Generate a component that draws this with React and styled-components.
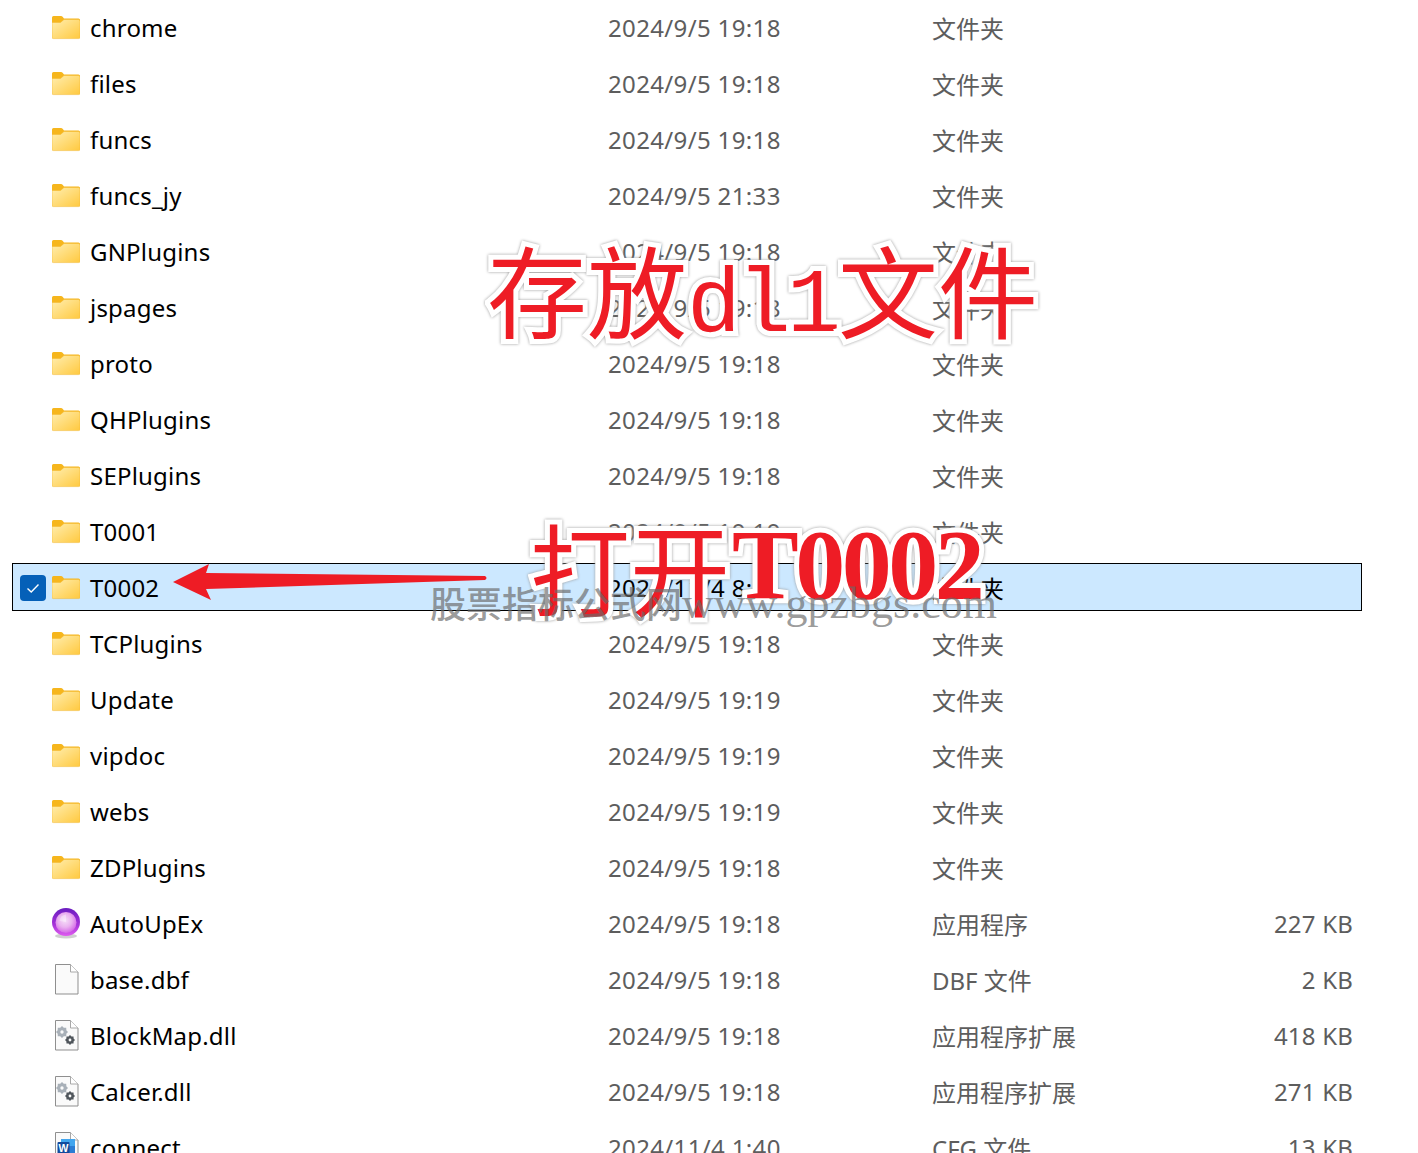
import React from "react";
import styled, { createGlobalStyle } from "styled-components";

const Global = createGlobalStyle`
  html, body { margin: 0; padding: 0; background: #fff; }
  body { width: 1418px; height: 1153px; overflow: hidden; }
`;

const Page = styled.div`
  position: relative;
  width: 1418px;
  height: 1153px;
  overflow: hidden;
  background: #fff;
  font-family: "Noto Sans", "Noto Sans CJK SC", sans-serif;
  font-size: 24px;
`;

const List = styled.div`
  display: flex;
  flex-direction: column;
  gap: 8px;
  padding: 3px 56px 0 12px;
`;

const Row = styled.div`
  display: grid;
  grid-template-columns: 39px 38px 518px 324px 1fr auto;
  align-items: center;
  height: 48px;
  box-sizing: border-box;
  padding: 1px 8px 0 0;
  border: 1px solid ${p => (p.$selected ? "#000" : "transparent")};
  background: ${p => (p.$selected ? "#cce8ff" : "transparent")};
  color: ${p => (p.$selected ? "#000" : "#5d5d5d")};
`;

const CheckCell = styled.div`
  display: flex;
  padding-left: 7px;
`;

const Check = styled.div`
  width: 26px;
  height: 26px;
  border-radius: 4px;
  background: #0560b8;
  display: flex;
  align-items: center;
  justify-content: center;
`;

const IconCell = styled.div`
  display: flex;
  align-items: center;
  height: 32px;
`;

const Name = styled.div`
  color: #000;
  letter-spacing: 0.2px;
  white-space: nowrap;
`;

const DateText = styled.div`
  letter-spacing: 0.35px;
  white-space: nowrap;
`;

const TypeText = styled.div`
  white-space: nowrap;
`;

const Size = styled.div`
  text-align: right;
  letter-spacing: 0.2px;
  white-space: nowrap;
`;

const Title = styled.div`
  position: absolute;
  left: ${p => p.$x}px;
  top: ${p => p.$y}px;
  display: flex;
  align-items: baseline;
  font-family: "Noto Sans CJK SC", sans-serif;
  font-size: 100px;
  line-height: 100px;
  white-space: nowrap;
  color: #ee1c25;
  -webkit-text-stroke: 10px #fff;
  paint-order: stroke fill;
  filter: drop-shadow(0 0 1.5px #9a9a9a);
`;

const MonoLatin = styled.span`
  font-family: "Liberation Mono", monospace;
  font-size: 90px;
  letter-spacing: -4px;
  margin-right: 1px;
`;

const SerifLatin = styled.span`
  font-family: "Liberation Serif", serif;
  font-weight: 700;
  font-size: 100px;
  letter-spacing: -3.5px;
  margin-left: 2px;
  transform: translateY(-11px);
`;

const Watermark = styled.div`
  position: absolute;
  left: 430px;
  top: 579px;
  font-family: "Noto Sans CJK SC", sans-serif;
  font-size: 36px;
  font-weight: 500;
  line-height: 46px;
  color: rgba(105, 105, 105, 0.68);
  white-space: nowrap;
`;

const WatermarkLatin = styled.span`
  font-family: "Liberation Serif", serif;
  font-size: 44px;
`;

const ArrowSvg = styled.svg`
  position: absolute;
  left: 170px;
  top: 560px;
`;

const Folder = () => (
  <svg width="28" height="24" viewBox="0 0 28 24">
    <defs>
      <linearGradient id="fg" x1="0" y1="0" x2="1" y2="1">
        <stop offset="0" stopColor="#ffeeb0" />
        <stop offset="1" stopColor="#ffc93f" />
      </linearGradient>
    </defs>
    <path d="M0 1.5A1.5 1.5 0 0 1 1.5 0H9a2 2 0 0 1 1.6.8L12 2.5h14.5A1.5 1.5 0 0 1 28 4v6H0z" fill="#f6b61d" />
    <path d="M0 6.5H8.5L12 3.5H26.5A1.5 1.5 0 0 1 28 5V21.5A1.2 1.2 0 0 1 26.8 22.6H1.2A1.2 1.2 0 0 1 0 21.5z" fill="url(#fg)" stroke="#f3b62c" strokeWidth="0.5" />
  </svg>
);

const Orb = () => (
  <svg width="28" height="32" viewBox="0 0 28 32">
    <defs>
      <linearGradient id="oo" x1="0" y1="0" x2="0" y2="1">
        <stop offset="0" stopColor="#6a1cc0" />
        <stop offset="0.6" stopColor="#a632d8" />
        <stop offset="1" stopColor="#e05cf0" />
      </linearGradient>
      <radialGradient id="og" cx="0.45" cy="0.4" r="0.65">
        <stop offset="0" stopColor="#f6dff8" />
        <stop offset="0.5" stopColor="#eab2f0" />
        <stop offset="1" stopColor="#d25ce6" />
      </radialGradient>
    </defs>
    <ellipse cx="14" cy="28" rx="11" ry="2.4" fill="#aaa" opacity="0.55" />
    <circle cx="14" cy="14" r="14" fill="url(#oo)" />
    <circle cx="14" cy="14.5" r="10.5" fill="url(#og)" />
    <path d="M14 6.5A7.5 7.5 0 0 0 7.5 13L14 14z" fill="#fff" opacity="0.35" />
  </svg>
);

const DocBase = ({ children }) => (
  <svg width="28" height="32" viewBox="0 0 28 32">
    <path d="M3.5 .5H18.5L26 8V30H3.5z" fill="#fafafa" stroke="#8f8f8f" strokeWidth="1" />
    <path d="M18.5 .5V8H26" fill="#fff" stroke="#a8a8a8" strokeWidth="1" />
    {children}
  </svg>
);

const gearPath = (cx, cy, r, teeth = 8) => {
  const pts = [];
  for (let i = 0; i < teeth * 2; i++) {
    const a = (Math.PI * i) / teeth;
    const rr = i % 2 === 0 ? r : r * 0.78;
    pts.push(`${(cx + rr * Math.cos(a)).toFixed(2)} ${(cy + rr * Math.sin(a)).toFixed(2)}`);
  }
  return `M${pts.join("L")}z`;
};

const Gear = ({ cx, cy, r, fill }) => (
  <g>
    <path d={gearPath(cx, cy, r)} fill={fill} />
    <circle cx={cx} cy={cy} r={r * 0.28} fill="#fafafa" />
  </g>
);

const Dll = () => (
  <DocBase>
    <Gear cx={10} cy={12} r={6} fill="#a8b0b8" />
    <Gear cx={18} cy={20} r={5} fill="#50565c" />
  </DocBase>
);

const Word = () => (
  <DocBase>
    <rect x="9" y="7" width="14" height="22" fill="#41a5ee" />
    <rect x="9" y="14" width="14" height="8" fill="#2b7cd3" />
    <rect x="9" y="22" width="14" height="7" fill="#185abd" />
    <rect x="5.5" y="10" width="12" height="12" rx="1" fill="#124a9c" />
    <text x="11.5" y="20" textAnchor="middle" fontSize="10.5" fontWeight="700" fill="#fff" fontFamily="'Liberation Sans', sans-serif">W</text>
  </DocBase>
);

const icons = { folder: Folder, orb: Orb, doc: () => <DocBase />, dll: Dll, word: Word };

const F = "文件夹";
const rows = [
  ["chrome", "2024/9/5 19:18", F, "", "folder"],
  ["files", "2024/9/5 19:18", F, "", "folder"],
  ["funcs", "2024/9/5 19:18", F, "", "folder"],
  ["funcs_jy", "2024/9/5 21:33", F, "", "folder"],
  ["GNPlugins", "2024/9/5 19:18", F, "", "folder"],
  ["jspages", "2024/9/5 19:18", F, "", "folder"],
  ["proto", "2024/9/5 19:18", F, "", "folder"],
  ["QHPlugins", "2024/9/5 19:18", F, "", "folder"],
  ["SEPlugins", "2024/9/5 19:18", F, "", "folder"],
  ["T0001", "2024/9/5 19:19", F, "", "folder"],
  ["T0002", "2024/11/4 8:14", F, "", "folder", true],
  ["TCPlugins", "2024/9/5 19:18", F, "", "folder"],
  ["Update", "2024/9/5 19:19", F, "", "folder"],
  ["vipdoc", "2024/9/5 19:19", F, "", "folder"],
  ["webs", "2024/9/5 19:19", F, "", "folder"],
  ["ZDPlugins", "2024/9/5 19:18", F, "", "folder"],
  ["AutoUpEx", "2024/9/5 19:18", "应用程序", "227 KB", "orb"],
  ["base.dbf", "2024/9/5 19:18", "DBF 文件", "2 KB", "doc"],
  ["BlockMap.dll", "2024/9/5 19:18", "应用程序扩展", "418 KB", "dll"],
  ["Calcer.dll", "2024/9/5 19:18", "应用程序扩展", "271 KB", "dll"],
  ["connect", "2024/11/4 1:40", "CFG 文件", "13 KB", "word"],
];

export default function App() {
  return (
    <Page>
      <Global />
      <List>
        {rows.map(([name, date, type, size, icon, selected]) => {
          const Icon = icons[icon];
          return (
            <Row key={name} $selected={selected}>
              <CheckCell>
                {selected && (
                  <Check>
                    <svg width="16" height="16" viewBox="0 0 16 16">
                      <path d="M2.5 8.5L6.2 12L13.5 4.5" fill="none" stroke="#fff" strokeWidth="1.4" />
                    </svg>
                  </Check>
                )}
              </CheckCell>
              <IconCell><Icon /></IconCell>
              <Name>{name}</Name>
              <DateText>{date}</DateText>
              <TypeText>{type}</TypeText>
              <Size>{size}</Size>
            </Row>
          );
        })}
      </List>
      <ArrowSvg width="320" height="44" viewBox="170 560 320 44">
        <path d="M173 582L209 564L206 573L485 576Q488 578 485 580L206 589L211 600z" fill="#ee1c25" />
      </ArrowSvg>
      <Title $x={487} $y={238}>存放<MonoLatin>dl1</MonoLatin>文件</Title>
      <Title $x={530} $y={516}>打开<SerifLatin>T0002</SerifLatin></Title>
      <Watermark>股票指标公式网<WatermarkLatin>www.gpzbgs.com</WatermarkLatin></Watermark>
    </Page>
  );
}
